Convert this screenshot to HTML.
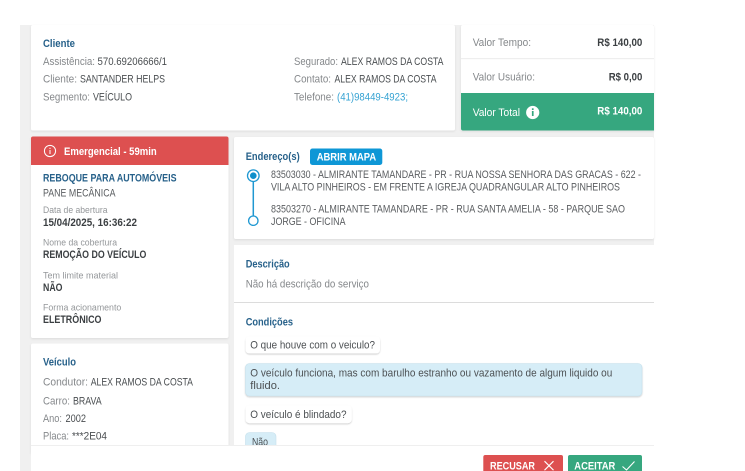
<!DOCTYPE html>
<html lang="pt">
<head>
<meta charset="utf-8">
<title>Serviço</title>
<style>
html,body{margin:0;padding:0;background:#fff;width:745px;height:471px;overflow:hidden}
svg{display:block;filter:blur(.3px)}
text{font-family:"Liberation Sans",sans-serif;font-size:11px;white-space:pre}
.l{fill:#85888b}
.v{fill:#4a4e51}
.d{fill:#3b3f42;font-weight:bold;font-size:10.6px}
.h{fill:#27618a;font-weight:bold;font-size:10.6px}
.s{fill:#94979a;font-size:9.6px}
.w{fill:#fff;font-weight:bold;font-size:10.6px}
.a{fill:#5a5d60}
.b{fill:#36a3d3}
.c{fill:#4c5053}
</style>
</head>
<body>
<svg width="745" height="471" viewBox="0 0 745 471" xmlns="http://www.w3.org/2000/svg">
<defs>
<filter id="sh" x="-5%" y="-5%" width="110%" height="115%"><feDropShadow dx="0" dy="1" stdDeviation="1" flood-color="#000" flood-opacity=".09"/></filter>
<filter id="sm" x="-10%" y="-20%" width="120%" height="150%"><feDropShadow dx="0" dy="1" stdDeviation=".8" flood-color="#000" flood-opacity=".2"/></filter>
</defs>

<rect x="20" y="25" width="634" height="446" fill="#f0f0f0"/>

<!-- Cliente -->
<rect x="31" y="25" width="424" height="105.5" rx="2" fill="#fff" filter="url(#sh)"/>
<text class="h" x="43" y="47" textLength="32" lengthAdjust="spacingAndGlyphs">Cliente</text>
<text class="l" x="43" y="65" textLength="52" lengthAdjust="spacingAndGlyphs">Assistência:</text>
<text class="v" x="97.5" y="65" textLength="69.5" lengthAdjust="spacingAndGlyphs">570.69206666/1</text>
<text class="l" x="43" y="82.7" textLength="34" lengthAdjust="spacingAndGlyphs">Cliente:</text>
<text class="v" x="80" y="82.7" textLength="85" lengthAdjust="spacingAndGlyphs">SANTANDER HELPS</text>
<text class="l" x="43" y="100.3" textLength="47" lengthAdjust="spacingAndGlyphs">Segmento:</text>
<text class="v" x="93" y="100.3" textLength="39" lengthAdjust="spacingAndGlyphs">VEÍCULO</text>
<text class="l" x="294" y="65" textLength="44" lengthAdjust="spacingAndGlyphs">Segurado:</text>
<text class="v" x="341" y="65" textLength="102.5" lengthAdjust="spacingAndGlyphs">ALEX RAMOS DA COSTA</text>
<text class="l" x="294" y="82.7" textLength="37" lengthAdjust="spacingAndGlyphs">Contato:</text>
<text class="v" x="334.5" y="82.7" textLength="102" lengthAdjust="spacingAndGlyphs">ALEX RAMOS DA COSTA</text>
<text class="l" x="294" y="100.3" textLength="40" lengthAdjust="spacingAndGlyphs">Telefone:</text>
<text class="b" x="337" y="100.3" textLength="71" lengthAdjust="spacingAndGlyphs">(41)98449-4923;</text>

<!-- Valores -->
<rect x="461" y="25" width="193" height="105.5" rx="2" fill="#fff" filter="url(#sh)"/>
<rect x="461" y="58" width="193" height="1.2" fill="#eeeeee"/>
<path d="M461 93H654V130.5H463a2 2 0 0 1-2-2Z" fill="#36a77f"/>
<text class="l" x="472.7" y="46" textLength="58.3" lengthAdjust="spacingAndGlyphs">Valor Tempo:</text>
<text class="d" x="597.3" y="46" textLength="45" lengthAdjust="spacingAndGlyphs">R$ 140,00</text>
<text class="l" x="472.7" y="80.7" textLength="62.3" lengthAdjust="spacingAndGlyphs">Valor Usuário:</text>
<text class="d" x="608.7" y="80.7" textLength="33.6" lengthAdjust="spacingAndGlyphs">R$ 0,00</text>
<text x="472.7" y="116" fill="#fff" textLength="47.3" lengthAdjust="spacingAndGlyphs">Valor Total</text>
<circle cx="532.7" cy="112.5" r="6.6" fill="#fff"/>
<rect x="531.9" y="111" width="1.7" height="5" fill="#36a77f"/>
<rect x="531.9" y="108.3" width="1.7" height="1.7" fill="#36a77f"/>
<text class="w" x="597.3" y="114.7" textLength="45" lengthAdjust="spacingAndGlyphs">R$ 140,00</text>

<!-- Serviço -->
<rect x="31" y="136.5" width="197.5" height="201.5" rx="2" fill="#fff" filter="url(#sh)"/>
<path d="M31 165V138.5a2 2 0 0 1 2-2H226.5a2 2 0 0 1 2 2V165Z" fill="#dd5050"/>
<circle cx="50" cy="151" r="5.6" fill="none" stroke="#fff" stroke-width="1"/>
<rect x="49.5" y="150" width="1" height="4" fill="#fff"/>
<rect x="49.5" y="147.8" width="1" height="1.2" fill="#fff"/>
<text class="w" x="64" y="155" textLength="92.7" lengthAdjust="spacingAndGlyphs">Emergencial - 59min</text>
<text class="h" x="43" y="181.3" textLength="133.5" lengthAdjust="spacingAndGlyphs">REBOQUE PARA AUTOMÓVEIS</text>
<text class="a" x="43" y="196.7" textLength="72.5" lengthAdjust="spacingAndGlyphs">PANE MECÂNICA</text>
<text class="s" x="43" y="213" textLength="64.5" lengthAdjust="spacingAndGlyphs">Data de abertura</text>
<text class="d" x="43" y="226" textLength="94" lengthAdjust="spacingAndGlyphs">15/04/2025, 16:36:22</text>
<text class="s" x="43" y="245.7" textLength="74" lengthAdjust="spacingAndGlyphs">Nome da cobertura</text>
<text class="d" x="43" y="258" textLength="103.3" lengthAdjust="spacingAndGlyphs">REMOÇÃO DO VEÍCULO</text>
<text class="s" x="43" y="278.3" textLength="75" lengthAdjust="spacingAndGlyphs">Tem limite material</text>
<text class="d" x="43" y="291" textLength="19.5" lengthAdjust="spacingAndGlyphs">NÃO</text>
<text class="s" x="43" y="310.3" textLength="78.3" lengthAdjust="spacingAndGlyphs">Forma acionamento</text>
<text class="d" x="43" y="323" textLength="58.5" lengthAdjust="spacingAndGlyphs">ELETRÔNICO</text>

<!-- Veículo -->
<rect x="31" y="343.5" width="197.5" height="110" rx="2" fill="#fff" filter="url(#sh)"/>
<text class="h" x="43" y="365.3" textLength="33" lengthAdjust="spacingAndGlyphs">Veículo</text>
<text class="l" x="43" y="385.7" textLength="45" lengthAdjust="spacingAndGlyphs">Condutor:</text>
<text class="v" x="90.7" y="385.7" textLength="102.3" lengthAdjust="spacingAndGlyphs">ALEX RAMOS DA COSTA</text>
<text class="l" x="43" y="404.3" textLength="27" lengthAdjust="spacingAndGlyphs">Carro:</text>
<text class="v" x="73" y="404.3" textLength="28.7" lengthAdjust="spacingAndGlyphs">BRAVA</text>
<text class="l" x="43" y="422" textLength="19" lengthAdjust="spacingAndGlyphs">Ano:</text>
<text class="v" x="65.5" y="422" textLength="20.5" lengthAdjust="spacingAndGlyphs">2002</text>
<text class="l" x="43" y="439.7" textLength="26" lengthAdjust="spacingAndGlyphs">Placa:</text>
<text class="v" x="72" y="439.7" textLength="35" lengthAdjust="spacingAndGlyphs">***2E04</text>

<!-- Endereços -->
<rect x="234" y="137" width="420" height="102" rx="2" fill="#fff" filter="url(#sh)"/>
<text class="h" x="245.7" y="160" textLength="54" lengthAdjust="spacingAndGlyphs">Endereço(s)</text>
<rect x="310" y="148.5" width="72.3" height="16.5" rx="2.5" fill="#0e97d6"/>
<text class="w" x="316.7" y="160.5" textLength="59.5" lengthAdjust="spacingAndGlyphs">ABRIR MAPA</text>
<line x1="253.3" y1="178" x2="253.3" y2="216" stroke="#1f98d2" stroke-width="1.5"/>
<circle cx="253.3" cy="175.7" r="5.8" fill="#fff" stroke="#1f98d2" stroke-width="1.3"/>
<circle cx="253.3" cy="175.7" r="3.3" fill="#0f8fcb"/>
<circle cx="253.3" cy="220.7" r="4.7" fill="#fff" stroke="#1f98d2" stroke-width="1.3"/>
<text class="a" x="271" y="178" textLength="370" lengthAdjust="spacingAndGlyphs">83503030 - ALMIRANTE TAMANDARE - PR - RUA NOSSA SENHORA DAS GRACAS - 622 -</text>
<text class="a" x="271" y="190.7" textLength="349" lengthAdjust="spacingAndGlyphs">VILA ALTO PINHEIROS - EM FRENTE A IGREJA QUADRANGULAR ALTO PINHEIROS</text>
<text class="a" x="271" y="212.7" textLength="354" lengthAdjust="spacingAndGlyphs">83503270 - ALMIRANTE TAMANDARE - PR - RUA SANTA AMELIA - 58 - PARQUE SAO</text>
<text class="a" x="271" y="225" textLength="74.5" lengthAdjust="spacingAndGlyphs">JORGE - OFICINA</text>

<!-- Descrição e condições -->
<rect x="234" y="245" width="420" height="226" fill="#fff"/>
<text class="h" x="245.7" y="267.3" textLength="44" lengthAdjust="spacingAndGlyphs">Descrição</text>
<text class="l" x="245.7" y="287.7" textLength="123.3" lengthAdjust="spacingAndGlyphs">Não há descrição do serviço</text>
<rect x="234" y="302" width="420" height="1" fill="#dcdcdc"/>
<text class="h" x="245.7" y="325.7" textLength="47.3" lengthAdjust="spacingAndGlyphs">Condições</text>

<rect x="245.5" y="336.2" width="134.5" height="17.3" rx="4" fill="#fff" filter="url(#sm)"/>
<text class="c" x="250.3" y="348.3" textLength="124.7" lengthAdjust="spacingAndGlyphs">O que houve com o veiculo?</text>
<rect x="245.5" y="363.5" width="396.5" height="32.5" rx="4" fill="#d6edf7" stroke="#c5e0ec" stroke-width=".6" filter="url(#sm)"/>
<text class="c" x="250.3" y="376.3" textLength="362" lengthAdjust="spacingAndGlyphs">O veículo funciona, mas com barulho estranho ou vazamento de algum liquido ou</text>
<text class="c" x="250.3" y="389" textLength="29.7" lengthAdjust="spacingAndGlyphs">fluido.</text>
<rect x="245.5" y="405.2" width="106.2" height="18" rx="4" fill="#fff" filter="url(#sm)"/>
<text class="c" x="250.3" y="418" textLength="96.2" lengthAdjust="spacingAndGlyphs">O veículo é blindado?</text>
<rect x="245.5" y="432.5" width="30.5" height="20" rx="4" fill="#d6edf7" stroke="#c5e0ec" stroke-width=".6"/>
<text class="c" x="252" y="445.5" textLength="16" lengthAdjust="spacingAndGlyphs">Não</text>

<!-- Rodapé -->
<rect x="31" y="445" width="623" height="26" fill="#fff"/>
<rect x="31" y="445" width="623" height="1" fill="#efefef"/>
<path d="M483.3 471V457a2 2 0 0 1 2-2H561a2 2 0 0 1 2 2V471Z" fill="#dd5050"/>
<text class="w" x="490" y="469.4" textLength="45" lengthAdjust="spacingAndGlyphs">RECUSAR</text>
<path d="M544.5 461.2L553.5 470.2M553.5 461.2L544.5 470.2" stroke="#fff" stroke-width="1.1" fill="none"/>
<path d="M568 471V457a2 2 0 0 1 2-2H640a2 2 0 0 1 2 2V471Z" fill="#36a77f"/>
<text class="w" x="574.3" y="469.4" textLength="41" lengthAdjust="spacingAndGlyphs">ACEITAR</text>
<path d="M622.500 466.500L626.500 470L634.500 461.500" stroke="#fff" stroke-width="1.1" fill="none"/>
</svg>
</body>
</html>
